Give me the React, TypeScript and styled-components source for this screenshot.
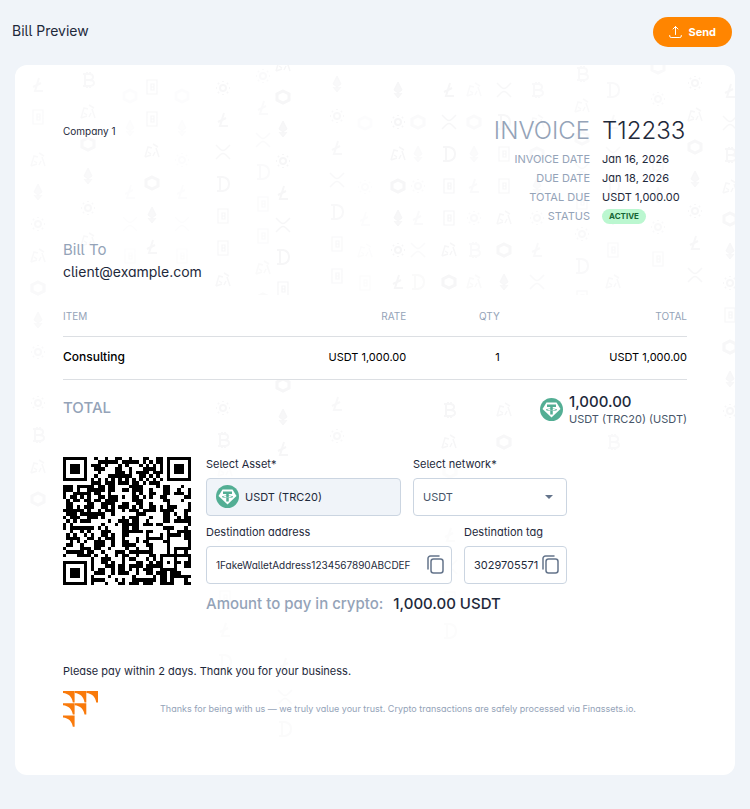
import React from "react";
import styled, { createGlobalStyle } from "styled-components";

/* ---------- QR code (version 5, byte mode) ---------- */

const QR_SIZE = 37;
const DATA_WORDS = 108;
const EC_WORDS = 26;
const FORMAT_BITS = "111011111000100";

function gfTables() {
  const exp: number[] = [];
  const log: number[] = [];
  let x = 1;
  for (let i = 0; i < 255; i++) {
    exp[i] = x;
    log[x] = i;
    x <<= 1;
    if (x & 256) x ^= 0x11d;
  }
  return { exp, log };
}

function errorWords(data: number[]): number[] {
  const { exp, log } = gfTables();
  const mul = (a: number, b: number) => (a && b ? exp[(log[a] + log[b]) % 255] : 0);
  let gen = [1];
  for (let i = 0; i < EC_WORDS; i++) {
    const next = new Array(gen.length + 1).fill(0);
    gen.forEach((g, j) => {
      next[j] ^= g;
      next[j + 1] ^= mul(g, exp[i]);
    });
    gen = next;
  }
  const rem = [...data, ...new Array(EC_WORDS).fill(0)];
  for (let i = 0; i < data.length; i++) {
    const f = rem[i];
    gen.forEach((g, j) => {
      rem[i + j] ^= mul(g, f);
    });
  }
  return rem.slice(data.length);
}

function encodeQr(text: string): boolean[][] {
  let bits = "0100" + text.length.toString(2).padStart(8, "0");
  for (const ch of text) bits += ch.charCodeAt(0).toString(2).padStart(8, "0");
  bits += "0000";
  const data: number[] = [];
  for (let i = 0; i + 8 <= bits.length; i += 8) data.push(parseInt(bits.slice(i, i + 8), 2));
  for (let i = 0; data.length < DATA_WORDS; i++) data.push(i % 2 ? 0x11 : 0xec);
  const stream = [...data, ...errorWords(data)].map((w) => w.toString(2).padStart(8, "0")).join("");

  const n = QR_SIZE;
  const grid: (boolean | null)[][] = Array.from({ length: n }, () => new Array(n).fill(null));
  const ring = (cy: number, cx: number, radius: number, white: number[]) => {
    for (let y = -radius; y <= radius; y++)
      for (let x = -radius; x <= radius; x++) {
        const r = cy + y;
        const c = cx + x;
        if (r >= 0 && c >= 0 && r < n && c < n) grid[r][c] = !white.includes(Math.max(Math.abs(x), Math.abs(y)));
      }
  };
  ring(3, 3, 4, [2, 4]);
  ring(3, n - 4, 4, [2, 4]);
  ring(n - 4, 3, 4, [2, 4]);
  ring(n - 7, n - 7, 2, [1]);
  for (let i = 8; i < n - 8; i++) {
    grid[6][i] = i % 2 === 0;
    grid[i][6] = i % 2 === 0;
  }
  const f = [...FORMAT_BITS].map((b) => b === "1");
  [0, 1, 2, 3, 4, 5, 7, 8].forEach((c, i) => (grid[8][c] = f[i]));
  [7, 5, 4, 3, 2, 1, 0].forEach((r, i) => (grid[r][8] = f[8 + i]));
  for (let i = 0; i < 7; i++) grid[n - 1 - i][8] = f[i];
  for (let i = 0; i < 8; i++) grid[8][n - 8 + i] = f[7 + i];
  grid[n - 8][8] = true;

  let k = 0;
  let up = true;
  for (let right = n - 1; right > 0; right -= 2) {
    if (right === 6) right = 5;
    for (let i = 0; i < n; i++) {
      const r = up ? n - 1 - i : i;
      for (const c of [right, right - 1]) {
        if (grid[r][c] === null) {
          const bit = stream[k++] === "1";
          grid[r][c] = (r + c) % 2 === 0 ? !bit : bit;
        }
      }
    }
    up = !up;
  }
  return grid as boolean[][];
}

const QrCode = ({ value }: { value: string }) => {
  const d = encodeQr(value)
    .map((row, y) => row.map((on, x) => (on ? `M${x} ${y}h1v1h-1z` : "")).join(""))
    .join("");
  return (
    <QrImage viewBox={`0 0 ${QR_SIZE} ${QR_SIZE}`} shapeRendering="crispEdges" role="img" aria-label="Payment QR code">
      <path d={d} fill="#000" />
    </QrImage>
  );
};

/* ---------- Icons ---------- */

const UploadIcon = () => (
  <svg width="13" height="14" viewBox="0 0 13 14" fill="none" stroke="#fff" strokeLinecap="round" strokeLinejoin="round" aria-hidden="true">
    <path d="M6.500 9.500V1.500M4 4 6.500 1.500 9 4M.7 10.500v.5a1.500 1.500 0 0 0 1.500 1.500h8.600A1.500 1.500 0 0 0 12.300 11v-.5" />
  </svg>
);

const TetherIcon = () => (
  <svg width="23" height="23" viewBox="0 0 46 46" aria-hidden="true">
    <circle cx="23" cy="23" r="23" fill="#53ae94" />
    <path d="M13 9h20l8 13-18 17L5 22z" fill="#fff" />
    <path d="M14 13h18v5h-6.500v3c5 .3 8.500 1.300 8.500 2.500s-3.500 2.200-8.500 2.500v7h-5v-7c-5-.3-8.500-1.300-8.500-2.500s3.500-2.200 8.500-2.500v-3H14z" fill="#53ae94" />
    <path d="M20.500 22.200v2.300c1.500.1 3.500.1 5 0v-2.300c3.500.2 6 .7 6 1.300 0 .8-3.800 1.400-8.500 1.400s-8.500-.6-8.500-1.400c0-.6 2.500-1.100 6-1.300z" fill="#fff" />
  </svg>
);

const CopyIcon = () => (
  <svg width="17" height="19" viewBox="0 0 17 19" fill="none" stroke="#64748b" strokeWidth="1.500" strokeLinecap="round" aria-hidden="true">
    <rect x="4" y="4" width="12" height="14" rx="2.500" />
    <path d="M1 14V3.500A2.500 2.500 0 0 1 3.500 1H12" />
  </svg>
);

const BrandLogo = () => (
  <svg width="35" height="36" viewBox="0 0 35 36" fill="#f97a0b" role="img" aria-label="Finassets">
    {[
      [0, 0],
      [11.7, 0],
      [23.4, 0],
      [0, 12.2],
      [11.7, 12.2],
      [0, 24.4],
    ].map(([x, y]) => (
      <path key={`${x}-${y}`} transform={`translate(${x} ${y})`} d="M0 0H11.600V11.400H9.800C9.200 6 5.500 2.500 0 2z" />
    ))}
  </svg>
);

/* ---------- Coin watermark ---------- */

const coins: Record<string, React.ReactNode> = {
  L: <path d="M1-7-3 6H5M-5 2 3-2" />,
  X: <path d="M-7-7-3-3Q0 0 3-3L7-7M-7 7-3 3Q0 0 3 3L7 7" strokeWidth="1.500" />,
  D: <path d="M-6-7H0Q6-6 6 0T0 7H-6M-3-7V7" />,
  B: <path d="M-5-6H1Q5-6 5-3T1 0H-3M1 0Q6 0 6 3T1 6H-5M-3-6V6M-1-8v2M2-8v2M-1 6v2M2 6v2" />,
  R: <path d="M-5-7H5V7H-5zM-1-3H2V3H-1zM-1 0H2" strokeWidth="1.200" />,
  F: <path d="M-7 6-4-4 0-3M-7 6-1 4M-4 1-1 3M1 5 3 1M1-7 6-4M4-3 7 6" strokeWidth="1.500" />,
  H: <path d="M0-6 6-3V3L0 6-6 3V-3z" strokeWidth="3" />,
  E: <path d="M0-8 4 0 0 3-4 0zM-4 3 0 8 4 3" fill="#f7f7f8" strokeWidth="1" />,
  C: (
    <>
      <circle r="3" />
      <path d="M0-7v1M0 6v1M-7 0h1M6 0h1M-5-5l1 1M4 4l1 1M5-5 4-4M-4 4l-1 1" />
    </>
  ),
};

type Strand = { x: number; y: number; run: string; opacity: number };

const strands: Strand[] = [
  { x: 23, y: 20, run: "LR", opacity: 0.6 },
  { x: 23, y: 95, run: "FECFHEC", opacity: 0.6 },
  { x: 23, y: 338, run: "CBFH", opacity: 0.7 },
  { x: 73, y: 15, run: "BFHECF", opacity: 0.7 },
  { x: 115, y: 31, run: "HE LXR", opacity: 0.3 },
  { x: 137, y: 22, run: "RRFHEL", opacity: 0.8 },
  { x: 167, y: 31, run: "HECLXR", opacity: 0.3 },
  { x: 208, y: 23, run: "CLXDRRF   CB", opacity: 0.8 },
  { x: 248, y: 11, run: "CLXDRRFH", opacity: 0.5 },
  { x: 268, y: 0, run: "FHECLXDR  HEL", opacity: 1 },
  { x: 322, y: 19, run: "ECLXDRR   LC", opacity: 0.7 },
  { x: 350, y: 58, run: "H CLFRH", opacity: 0.3 },
  { x: 383, y: 25, run: "ECFHECL", opacity: 0.9 },
  { x: 403, y: 57, run: "HECLXD", opacity: 0.5 },
  { x: 434, y: 25, run: "LXDRRFH   BF", opacity: 0.9 },
  { x: 459, y: 25, run: "FHELCBF", opacity: 0.5 },
  { x: 489, y: 25, run: "XDRRFHE   FH", opacity: 0.8 },
  { x: 522, y: 25, run: "BFHECLX", opacity: 0.6 },
  { x: 567, y: 9, run: "BFHXRCDR", opacity: 0.6 },
  { x: 598, y: 25, run: "DLXDCRF    B", opacity: 0.6 },
  { x: 643, y: 2, run: "HCLRECR", opacity: 0.6 },
  { x: 680, y: 18, run: "CFHECLX", opacity: 0.8 },
  { x: 715, y: 26, run: "LXBFHECRHEC", opacity: 0.8 },
  { x: 210, y: 405, run: "FLXDRLD", opacity: 0.3 },
  { x: 270, y: 600, run: "LXD", opacity: 0.4 },
  { x: 435, y: 406, run: "HFLXRD", opacity: 0.3 },
];

const Watermark = () => (
  <WatermarkLayer viewBox="0 0 720 710" preserveAspectRatio="xMidYMin slice" fill="none" stroke="#f6f6f7" strokeWidth="2" aria-hidden="true">
    {strands.map((s) => (
      <g key={`${s.x}-${s.y}`} opacity={s.opacity}>
        {[...s.run].map((c, i) => (
          <g key={i} transform={`translate(${s.x} ${s.y + i * 32})`}>
            {coins[c]}
          </g>
        ))}
      </g>
    ))}
  </WatermarkLayer>
);

/* ---------- Styles ---------- */

const ink = "#1e293b";
const muted = "#94a3b8";
const rounded = `font-feature-settings: "cv11", "cv05";`;

const GlobalStyle = createGlobalStyle`
  *, *::before, *::after { box-sizing: border-box; }
  body {
    margin: 0;
    background: #f0f4f9;
    color: ${ink};
    font-family: Inter, "Liberation Sans", sans-serif;
    font-size: 11px;
    ${rounded}
  }
  button, input, select { font: inherit; font-feature-settings: inherit; color: inherit; }
`;

const Page = styled.div`
  padding-bottom: 34px;
`;

const Header = styled.header`
  display: flex;
  align-items: flex-start;
  justify-content: space-between;
  height: 65px;
  padding: 17px 18px 0 12px;
`;

const Title = styled.h1`
  margin: 0;
  font-size: 14px;
  font-weight: 400;
  line-height: 28px;
`;

const SendButton = styled.button`
  display: flex;
  align-items: center;
  gap: 6px;
  height: 30px;
  padding: 0 16px;
  border: 0;
  border-radius: 15px;
  background: #ff8500;
  color: #fff;
  font-weight: 700;
  font-feature-settings: normal;
`;

const Card = styled.main`
  position: relative;
  overflow: hidden;
  margin: 0 15px;
  padding: 48px;
  border-radius: 12px;
  background: #fff;
`;

const WatermarkLayer = styled.svg`
  position: absolute;
  inset: 0;
  width: 100%;
  height: 100%;
`;

const Content = styled.div`
  position: relative;
`;

const Top = styled.section`
  display: flex;
  justify-content: space-between;
`;

const Company = styled.div`
  font-size: 10px;
  line-height: 36px;
`;

const Meta = styled.dl`
  display: grid;
  grid-template-columns: auto 85px;
  grid-template-rows: 36px;
  grid-auto-rows: 19px;
  align-items: center;
  column-gap: 12px;
  margin: 0;
`;

const MetaLabel = styled.dt<{ $large?: boolean }>`
  color: ${muted};
  text-align: right;
  font-size: ${(p) => (p.$large ? 24 : 11)}px;
  font-weight: ${(p) => (p.$large ? 300 : 400)};
  line-height: ${(p) => (p.$large ? "35px" : "normal")};
  align-self: ${(p) => (p.$large ? "start" : "center")};
`;

const MetaValue = styled.dd<{ $large?: boolean }>`
  display: flex;
  margin: 0;
  white-space: nowrap;
  font-size: ${(p) => (p.$large ? 24 : 11)}px;
  font-weight: ${(p) => (p.$large ? 300 : 400)};
  line-height: ${(p) => (p.$large ? "35px" : "normal")};
  align-self: ${(p) => (p.$large ? "start" : "center")};
`;

const Badge = styled.span`
  margin-top: 2px;
  padding: 0 7px;
  border-radius: 8px;
  background: #bbf7d0;
  color: #166534;
  font-size: 8px;
  font-weight: 700;
  line-height: 15px;
`;

const BillTo = styled.section`
  margin: 14px 0 12px;
  font-size: 14px;
  line-height: 22px;
`;

const BillLabel = styled.div`
  color: ${muted};
  font-size: 15px;
`;

const Items = styled.table`
  width: 100%;
  table-layout: fixed;
  border-collapse: collapse;
  background: #fff;
  color: #000;
`;

const HeadCell = styled.th<{ $w: string; $left?: boolean }>`
  width: ${(p) => p.$w};
  height: 41px;
  padding: 2px 0 0;
  border-bottom: 1px solid #dcdfe3;
  color: ${muted};
  font-size: 10px;
  font-weight: 400;
  text-align: ${(p) => (p.$left ? "left" : "right")};
`;

const Cell = styled.td<{ $name?: boolean }>`
  height: 43px;
  padding: 0 0 2px;
  border-bottom: 1px solid #dcdfe3;
  font-size: ${(p) => (p.$name ? 12 : 11)}px;
  font-weight: ${(p) => (p.$name ? 500 : 400)};
  text-align: ${(p) => (p.$name ? "left" : "right")};
`;

const Total = styled.section`
  display: flex;
  align-items: center;
  justify-content: space-between;
  height: 56px;
`;

const TotalLabel = styled.div`
  color: ${muted};
  font-size: 15px;
  font-weight: 500;
`;

const TotalValue = styled.div`
  display: flex;
  align-items: center;
  gap: 6px;
  line-height: 16px;
  padding-top: 4px;
`;

const TotalAmount = styled.div`
  font-size: 15px;
  font-weight: 500;
  line-height: 18px;
`;

const TotalAsset = styled.div`
  color: #475569;
`;

const Payment = styled.section`
  display: flex;
  align-items: flex-start;
  gap: 15px;
  margin-top: 21px;
`;

const QrImage = styled.svg`
  flex: none;
  width: 128px;
  height: 128px;
  background: #fff;
`;

const Fields = styled.div`
  display: grid;
  grid-template-columns: minmax(0, 1fr);
  gap: 9px;
  max-width: 361px;
  flex: 1;
`;

const FieldRow = styled.div<{ $cols: string }>`
  display: grid;
  grid-template-columns: ${(p) => p.$cols};
  gap: 12px;
`;

const Field = styled.div`
  display: grid;
  grid-template-columns: minmax(0, 1fr);
  gap: 6px;
`;

const FieldLabel = styled.label`
  line-height: 15px;
`;

const Box = styled.div<{ $filled?: boolean; $copy?: boolean }>`
  display: flex;
  align-items: center;
  gap: ${(p) => (p.$copy ? 1 : 6)}px;
  height: 38px;
  padding: 0 ${(p) => (p.$copy ? 7 : 9)}px 0 9px;
  border: 1px solid #cbd5e1;
  border-radius: 4px;
  background: ${(p) => (p.$filled ? "#f0f4f9" : "#fff")};
`;

const Select = styled.select<{ $dark?: boolean }>`
  flex: 1;
  min-width: 0;
  padding: 0;
  border: 0;
  background: transparent;
  appearance: none;
  color: ${(p) => (p.$dark ? ink : "#475569")};
`;

const Caret = styled.span`
  margin-right: 4px;
  border: 4px solid transparent;
  border-top-color: #64748b;
  border-bottom: 0;
`;

const TextInput = styled.input<{ $long?: boolean }>`
  flex: 1;
  min-width: 0;
  padding: 0;
  border: 0;
  background: transparent;
  font-size: ${(p) => (p.$long ? 10 : 11)}px;
`;

const CopyButton = styled.button`
  display: flex;
  flex: none;
  padding: 0;
  border: 0;
  background: none;
`;

const Amount = styled.div`
  display: flex;
  gap: 10px;
  margin-top: 2px;
  font-size: 15px;
  line-height: 18px;
  font-weight: 500;
  white-space: nowrap;
`;

const AmountLabel = styled.span`
  color: ${muted};
`;

const Note = styled.p`
  margin: 50px 0 12px;
  line-height: 16px;
`;

const Footer = styled.footer`
  display: flex;
  align-items: center;
  gap: 62px;
  color: ${muted};
  font-size: 9px;
`;

/* ---------- Page ---------- */

const address = "1FakeWalletAddress1234567890ABCDEF";
const tag = "3029705571";

export default function App() {
  return (
    <Page>
      <GlobalStyle />
      <Header>
        <Title>Bill Preview</Title>
        <SendButton type="button">
          <UploadIcon />
          Send
        </SendButton>
      </Header>
      <Card>
        <Watermark />
        <Content>
          <Top>
            <Company>Company 1</Company>
            <Meta>
              <MetaLabel $large>INVOICE</MetaLabel>
              <MetaValue $large>T12233</MetaValue>
              <MetaLabel>INVOICE DATE</MetaLabel>
              <MetaValue>Jan 16, 2026</MetaValue>
              <MetaLabel>DUE DATE</MetaLabel>
              <MetaValue>Jan 18, 2026</MetaValue>
              <MetaLabel>TOTAL DUE</MetaLabel>
              <MetaValue>USDT 1,000.00</MetaValue>
              <MetaLabel>STATUS</MetaLabel>
              <MetaValue>
                <Badge>ACTIVE</Badge>
              </MetaValue>
            </Meta>
          </Top>
          <BillTo>
            <BillLabel>Bill To</BillLabel>
            <div>client@example.com</div>
          </BillTo>
          <Items>
            <thead>
              <tr>
                <HeadCell $w="35%" $left>ITEM</HeadCell>
                <HeadCell $w="20%">RATE</HeadCell>
                <HeadCell $w="15%">QTY</HeadCell>
                <HeadCell $w="30%">TOTAL</HeadCell>
              </tr>
            </thead>
            <tbody>
              <tr>
                <Cell $name>Consulting</Cell>
                <Cell>USDT 1,000.00</Cell>
                <Cell>1</Cell>
                <Cell>USDT 1,000.00</Cell>
              </tr>
            </tbody>
          </Items>
          <Total>
            <TotalLabel>TOTAL</TotalLabel>
            <TotalValue>
              <TetherIcon />
              <div>
                <TotalAmount>1,000.00</TotalAmount>
                <TotalAsset>USDT (TRC20) (USDT)</TotalAsset>
              </div>
            </TotalValue>
          </Total>
          <Payment>
            <QrCode value={`tron:${address}?amount=1000.00&token=USDT&net=TRC20&tag=${tag}`} />
            <Fields>
              <FieldRow $cols="195fr 154fr">
                <Field>
                  <FieldLabel htmlFor="asset">Select Asset*</FieldLabel>
                  <Box $filled>
                    <TetherIcon />
                    <Select $dark id="asset" defaultValue="usdt">
                      <option value="usdt">USDT (TRC20)</option>
                    </Select>
                  </Box>
                </Field>
                <Field>
                  <FieldLabel htmlFor="network">Select network*</FieldLabel>
                  <Box>
                    <Select id="network" defaultValue="usdt">
                      <option value="usdt">USDT</option>
                    </Select>
                    <Caret />
                  </Box>
                </Field>
              </FieldRow>
              <FieldRow $cols="minmax(0, 1fr) 103px">
                <Field>
                  <FieldLabel htmlFor="address">Destination address</FieldLabel>
                  <Box $copy>
                    <TextInput $long id="address" readOnly value={address} />
                    <CopyButton type="button" aria-label="Copy address">
                      <CopyIcon />
                    </CopyButton>
                  </Box>
                </Field>
                <Field>
                  <FieldLabel htmlFor="tag">Destination tag</FieldLabel>
                  <Box $copy>
                    <TextInput id="tag" readOnly value={tag} />
                    <CopyButton type="button" aria-label="Copy tag">
                      <CopyIcon />
                    </CopyButton>
                  </Box>
                </Field>
              </FieldRow>
              <Amount>
                <AmountLabel>Amount to pay in crypto:</AmountLabel>
                <span>1,000.00 USDT</span>
              </Amount>
            </Fields>
          </Payment>
          <Note>Please pay within 2 days. Thank you for your business.</Note>
          <Footer>
            <BrandLogo />
            <span>Thanks for being with us — we truly value your trust. Crypto transactions are safely processed via Finassets.io.</span>
          </Footer>
        </Content>
      </Card>
    </Page>
  );
}
